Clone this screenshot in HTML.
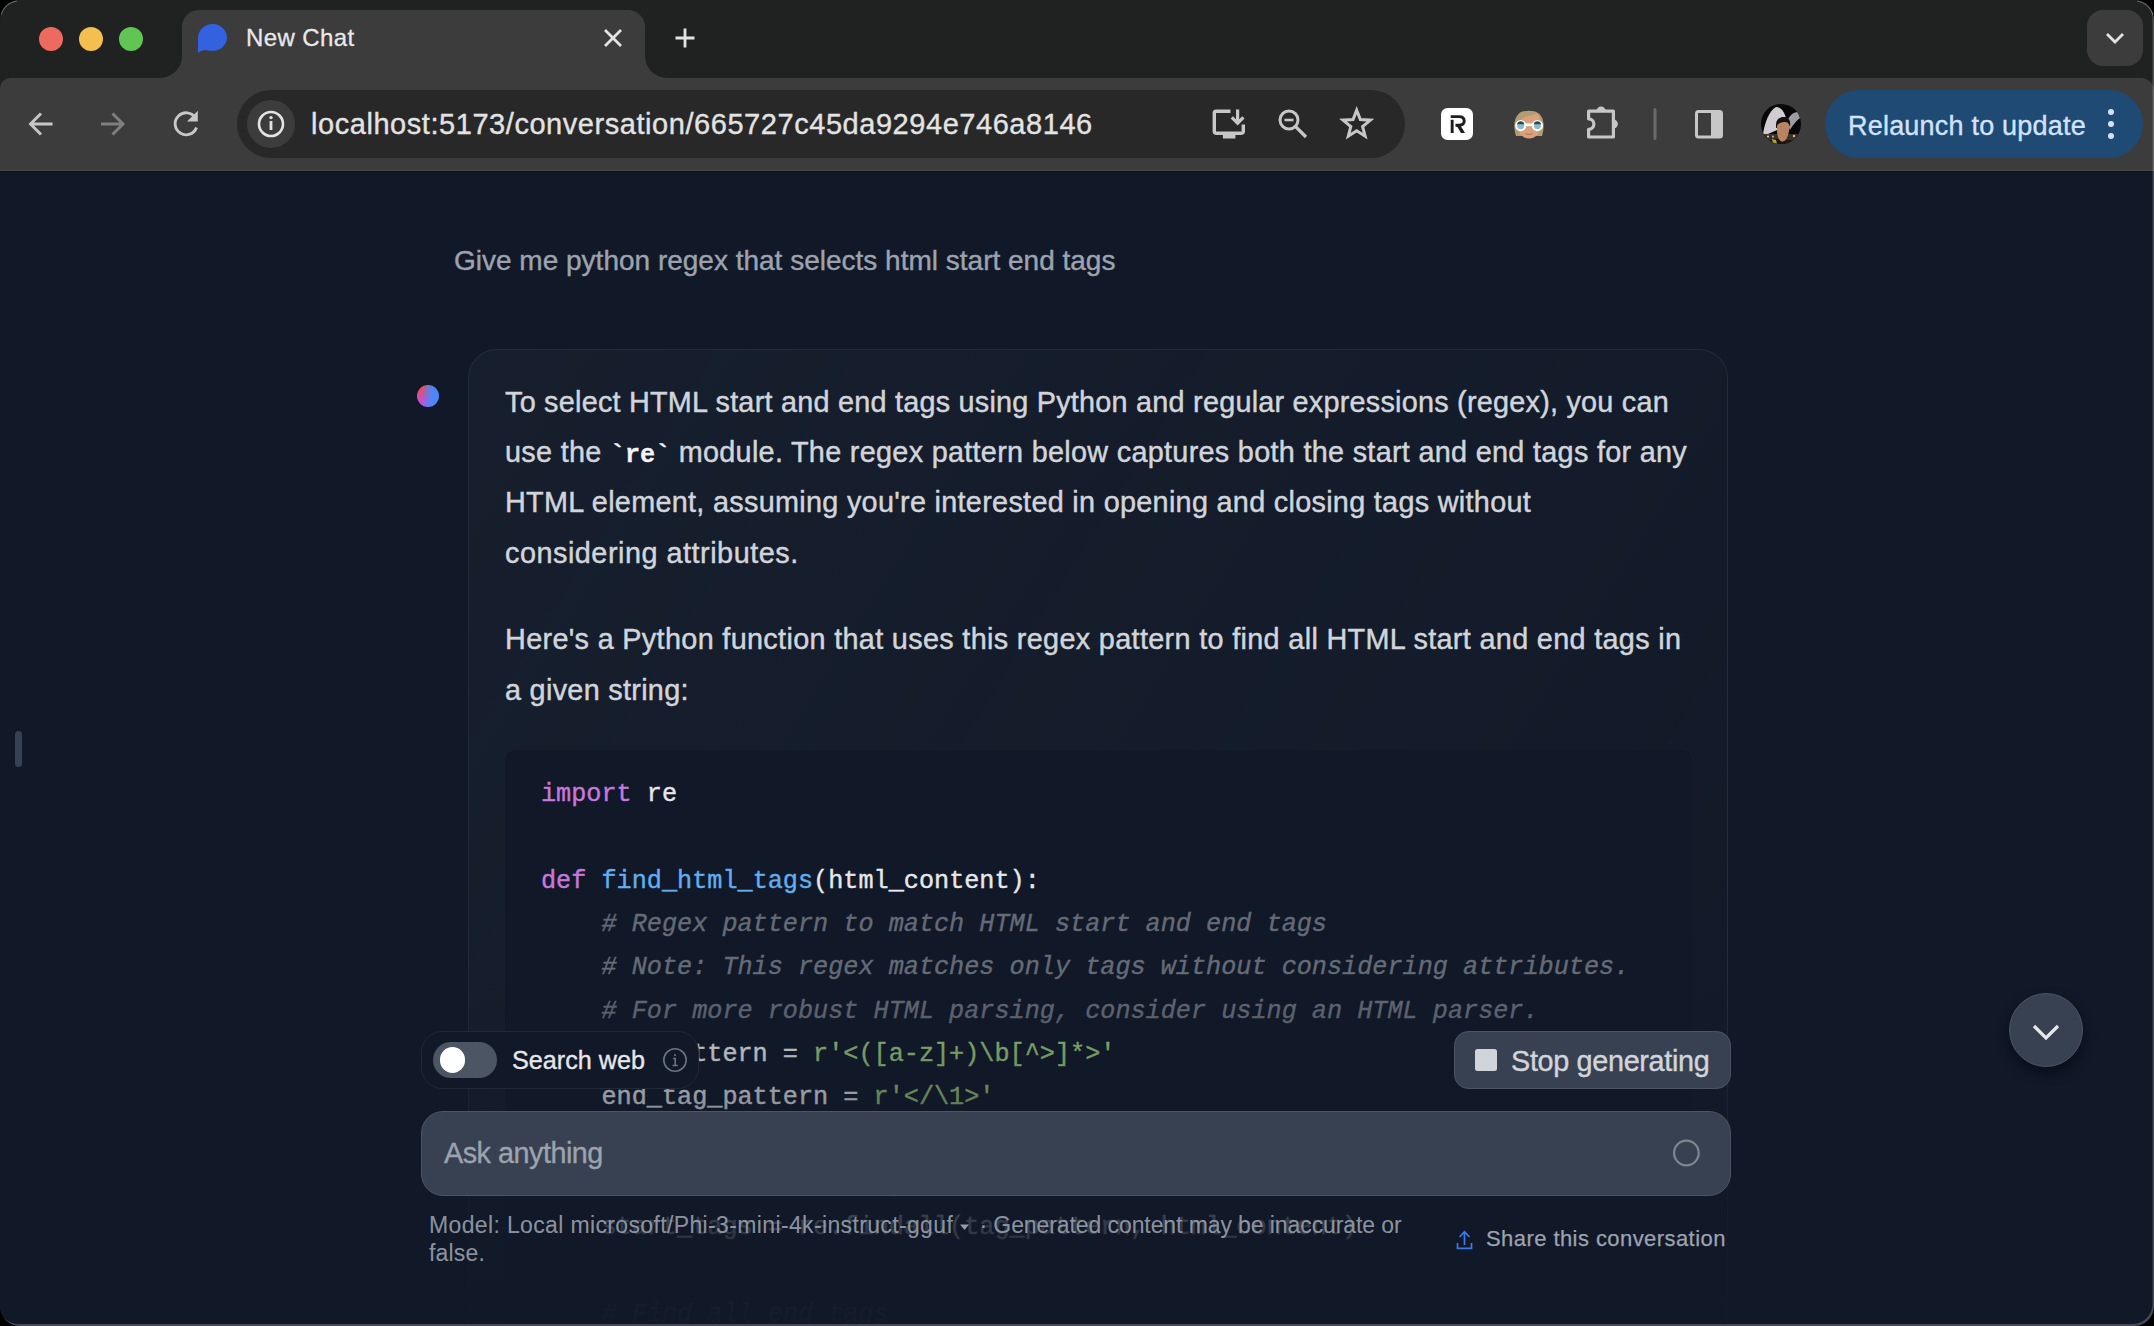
<!DOCTYPE html>
<html><head><meta charset="utf-8">
<style>
*{margin:0;padding:0;box-sizing:border-box}
html,body{width:2154px;height:1326px;overflow:hidden;background:#000}
body{font-family:"Liberation Sans",sans-serif;position:relative}
.abs{position:absolute}
#win{position:absolute;left:0;top:0;width:2154px;height:1326px;border-radius:20px;overflow:hidden;background:#111827}
#tabstrip{left:0;top:0;width:2154px;height:95px;background:#202221}
#toolbar{left:0;top:78px;width:2154px;height:93px;background:#3c3c3c;border-radius:10px 13px 0 0}
#tbline{left:0;top:170px;width:2154px;height:2px;background:#4a4b48;border-bottom:0.6px solid #0e1220}
.tl{position:absolute;top:27px;width:24px;height:24px;border-radius:50%}
#tab{left:182px;top:10px;width:463px;height:68px;background:#3c3c3c;border-radius:17px 17px 0 0}
.flare{position:absolute;top:56px;width:22px;height:22px;background:#3c3c3c}
.flare::after{content:"";position:absolute;left:0;top:0;width:22px;height:22px;background:#202221}
#flareL{left:160px}
#flareL::after{border-bottom-right-radius:22px}
#flareR{left:645px}
#flareR::after{border-bottom-left-radius:22px}
#tabtitle{left:246px;top:23.5px;font-size:24px;letter-spacing:0.4px;color:#e8e8e8;white-space:nowrap;-webkit-text-stroke:0.3px #e8e8e8}
#url{left:237px;top:90px;width:1168px;height:68px;border-radius:34px;background:#282828}
#infobg{left:247px;top:100px;width:48px;height:48px;border-radius:50%;background:#3c3c3c}
#urltext{left:311px;top:108px;font-size:29px;letter-spacing:0.553px;color:#e3e3e3;white-space:nowrap;-webkit-text-stroke:0.35px #e3e3e3}
#relaunch{left:1825px;top:90px;width:318px;height:68px;border-radius:34px;background:#1f4a73}
#relaunchtxt{left:1848px;top:111px;font-size:27px;letter-spacing:0.21px;color:#d3e3fd;white-space:nowrap;-webkit-text-stroke:0.35px #d3e3fd}
#dd{left:2087px;top:10px;width:56px;height:56px;border-radius:16px;background:#3c3c3c}

/* content */
.sans{font-family:"Liberation Sans",sans-serif}
.mono{font-family:"Liberation Mono",monospace}
#userq{left:454px;top:245px;font-size:28px;color:#9ca3af;white-space:nowrap;-webkit-text-stroke:0.4px #9ca3af}
#avatar{left:417px;top:385px;width:22px;height:22px;border-radius:50%;background:linear-gradient(to right,rgba(79,134,247,0) 20%,rgba(79,134,247,0.85) 55%,#4f86f7 75%),linear-gradient(to bottom,#ec4d58 15%,#c44fe4 85%)}
#msg{left:468px;top:349px;width:1260px;height:2000px;border-radius:29px;border:1.8px solid rgba(45,55,72,0.6);background:linear-gradient(to bottom right,rgba(31,41,55,0.42),rgba(31,41,55,0))}
.pl{position:absolute;left:505px;font-size:28.8px;color:#d1d5db;white-space:nowrap;-webkit-text-stroke:0.45px #d1d5db}
#code{left:505px;top:750px;width:1187px;height:1400px;border-radius:11px;background:#111827}
.cl{position:absolute;left:541px;font-family:"Liberation Mono",monospace;font-size:25.2px;color:#e5e7eb;white-space:pre;-webkit-text-stroke:0.4px currentColor}
.cl span{-webkit-text-stroke:0.4px currentColor}
.kw{color:#c678dd}.fn{color:#61aeee}.cm{color:#646b77;font-style:italic}.st{color:#98c379}
#fade{left:0;top:975px;width:2154px;height:351px;background:linear-gradient(to bottom,rgba(17,24,39,0) 0%,rgba(17,24,39,0.37) 34.2%,rgba(17,24,39,0.84) 71.2%,rgba(17,24,39,0.97) 100%)}
#handle{left:15px;top:731px;width:7px;height:36px;border-radius:4px;background:#374151}
</style></head><body>
<div id="win">
  <div id="tabstrip" class="abs"></div>
  <div class="tl" style="left:39px;background:#ed6a5e"></div>
  <div class="tl" style="left:79px;background:#f4bf4f"></div>
  <div class="tl" style="left:119px;background:#61c554"></div>
  <div id="flareL" class="flare"></div>
  <div id="flareR" class="flare"></div>
  <div id="tab" class="abs"></div>
  <div id="tabtitle" class="abs">New Chat</div>
  <div id="dd" class="abs"></div>
  <div id="toolbar" class="abs"></div>
  <div id="tbline" class="abs"></div>
  <div id="url" class="abs"></div>
  <div id="infobg" class="abs"></div>
  <div id="urltext" class="abs">localhost:5173/conversation/665727c45da9294e746a8146</div>
  <div id="relaunch" class="abs"></div>
  <div id="relaunchtxt" class="abs">Relaunch to update</div>


  <!-- chrome icons -->
  <svg class="abs" style="left:0;top:0" width="2154" height="172" viewBox="0 0 2154 172">
    <!-- favicon bubble -->
    <path d="M212.5 24 C204 24 198 30.5 198 38.5 L198 52.5 L204 50 C206 50.6 208.5 50.8 212.5 50.8 C220.5 50.8 227 45 227 37.4 C227 30 220.5 24 212.5 24 Z" fill="#3461e0"/>
    <!-- close x -->
    <path d="M606 31 L620 45 M620 31 L606 45" stroke="#e3e3e3" stroke-width="2.8" stroke-linecap="square"/>
    <!-- plus -->
    <path d="M685 28.5 V47.5 M675.5 38 H694.5" stroke="#e3e3e3" stroke-width="2.8"/>
    <!-- dropdown chevron -->
    <path d="M2107 34 L2115 42 L2123 34" stroke="#e3e3e3" stroke-width="2.8" fill="none"/>
    <!-- back -->
    <path d="M52.5 124 H32 M41 113.5 L30.5 124 L41 134.5" stroke="#c7c7c7" stroke-width="2.9" fill="none"/>
    <!-- forward -->
    <path d="M101 124 H121.5 M112.5 113.5 L123 124 L112.5 134.5" stroke="#7f7f7f" stroke-width="2.9" fill="none"/>
    <!-- reload -->
    <path d="M195.5 118 A11 11 0 1 0 196.5 127.5" stroke="#c7c7c7" stroke-width="2.9" fill="none"/>
    <path d="M187 121.5 H197.8 V110.7 Z" fill="#c7c7c7"/>
    <!-- info -->
    <circle cx="271" cy="124" r="12" stroke="#e3e3e3" stroke-width="2.6" fill="none"/>
    <rect x="269.6" y="121" width="2.8" height="9" fill="#e3e3e3"/>
    <circle cx="271" cy="117.6" r="1.7" fill="#e3e3e3"/>
    <!-- install -->
    <path d="M1230.5 111.2 H1216 A1.8 1.8 0 0 0 1214.3 113 V131.5 A1.8 1.8 0 0 0 1216 133.2 H1241.5 A1.8 1.8 0 0 0 1243.3 131.5 V124.5" stroke="#c7c7c7" stroke-width="3.4" fill="none"/>
    <rect x="1222.9" y="133" width="12.5" height="5.5" fill="#c7c7c7"/>
    <path d="M1237.6 109.5 V123 M1231.8 117.3 L1237.6 123.2 L1243.4 117.3" stroke="#c7c7c7" stroke-width="3.2" fill="none"/>
    <!-- zoom out -->
    <circle cx="1289" cy="120" r="9" stroke="#c7c7c7" stroke-width="3" fill="none"/>
    <path d="M1284.5 120 H1293.5" stroke="#c7c7c7" stroke-width="2.6"/>
    <path d="M1295.5 126.5 L1306 137" stroke="#c7c7c7" stroke-width="3.2"/>
    <!-- star -->
    <path d="M1356.70 110.20 L1360.34 119.58 L1370.40 120.15 L1362.60 126.52 L1365.16 136.25 L1356.70 130.80 L1348.24 136.25 L1350.80 126.52 L1343.00 120.15 L1353.06 119.58 Z" stroke="#c7c7c7" stroke-width="3" fill="none" stroke-linejoin="miter" stroke-miterlimit="3"/>
    <!-- R ext -->
    <rect x="1441" y="108" width="32" height="32" rx="6.5" fill="#ffffff"/>
    <path d="M1450.7 116.6 H1459 C1462.6 116.6 1464.2 118.7 1464.2 121.1 C1464.2 123.6 1462.6 125.3 1459 125.3 H1455.5" stroke="#1a1c20" stroke-width="2.9" fill="none"/>
    <rect x="1450.7" y="119.8" width="2.9" height="13.2" fill="#1a1c20"/>
    <path d="M1455.6 124 L1459.6 124 L1465 133 L1461 133 Z" fill="#1a1c20"/>
    <!-- face ext -->
    <path d="M1516 136 C1513.5 128 1513.5 119 1518.5 114 C1522.5 109.5 1535.5 109.5 1539.5 114 C1544.5 119 1544.5 128 1542 136 Z" fill="#b39b73"/>
    <path d="M1518.5 125 C1519 119 1524 116.5 1532 115.5 L1537 113.5 C1540 117 1540.5 121 1540 126 C1540 134 1535 138.5 1529 138.5 C1523 138.5 1518.5 134 1518.5 126 Z" fill="#d9a27d"/>
    <path d="M1525.5 133.5 C1527.5 134.6 1530.5 134.6 1532.5 133.5" stroke="#b07858" stroke-width="1.1" fill="none"/>
    <rect x="1524" y="123.5" width="10" height="2.6" fill="#ffffff"/>
    <circle cx="1520.7" cy="125.6" r="4.6" fill="#8fbccb" stroke="#ffffff" stroke-width="2"/>
    <circle cx="1537.4" cy="125.6" r="4.6" fill="#8fbccb" stroke="#ffffff" stroke-width="2"/>
    <path d="M1517 124.2 A3.8 3.8 0 0 1 1524.4 124.2 Z" fill="#264a58"/>
    <path d="M1533.7 124.2 A3.8 3.8 0 0 1 1541.1 124.2 Z" fill="#264a58"/>
    <!-- puzzle -->
    <path d="M1588.6 111.2 H1613.4 V137 H1588.6 V129.4 A5.3 5.3 0 0 0 1588.6 118.8 Z" stroke="#c7c7c7" stroke-width="3.2" fill="none" stroke-linejoin="round"/>
    <path d="M1596.4 111.5 A4.7 4.9 0 0 1 1605.8 111.5 Z" fill="#c7c7c7"/>
    <path d="M1613 119.3 A4.9 4.7 0 0 1 1613 128.7 Z" fill="#c7c7c7"/>
    <!-- separator -->
    <rect x="1653.5" y="108" width="3" height="32" rx="1.5" fill="#6a6a6a"/>
    <!-- sidebar -->
    <rect x="1696.5" y="111.5" width="25" height="25.5" rx="2" stroke="#c7c7c7" stroke-width="3" fill="none"/>
    <rect x="1711" y="111.5" width="10.5" height="25.5" fill="#c7c7c7"/>
    <!-- avatar -->
    <defs><clipPath id="avc"><circle cx="1781" cy="124" r="20"/></clipPath></defs>
    <g clip-path="url(#avc)">
      <rect x="1761" y="104" width="40" height="40" fill="#070707"/>
      <path d="M1763 134 C1765 122 1769 111 1776 107 C1782 107 1786 114 1787 124 L1782 128 L1768 134 Z" fill="#cfcdd3"/>
      <path d="M1787 122 C1789 116 1793 112 1798 112 L1800 118 C1796 121 1792 126 1790 130 Z" fill="#9d9ca3"/>
      <rect x="1761" y="134" width="40" height="7" fill="#3a3128"/>
      <circle cx="1768" cy="136.5" r="1" fill="#e8e0c8"/><circle cx="1773" cy="136.5" r="0.9" fill="#d0c8b0"/><circle cx="1794" cy="136" r="1.2" fill="#c8c0a0"/><circle cx="1797" cy="138" r="1" fill="#b0b8c8"/>
      <path d="M1776 125 C1776 119 1780 117 1784 117 C1788 117 1791 120 1790 126 L1776 128 Z" fill="#141010"/>
      <path d="M1777 126 C1778 123 1782 122 1786 122 C1790 123 1790 127 1789 131 C1788 137 1786 141 1782 142 C1779 141 1777 136 1777 131 Z" fill="#b88462"/>
      <path d="M1766 144 C1769 140 1774 138 1778 139 L1782 142 C1786 140 1790 139 1793 141 L1800 144 Z" fill="#1a1510"/>
      <path d="M1772 139 L1776 140 L1777 144 L1773 144 Z" fill="#b0a830"/>
    </g>
    <!-- relaunch dots -->
    <circle cx="2111" cy="112" r="3" fill="#d3e3fd"/>
    <circle cx="2111" cy="124" r="3" fill="#d3e3fd"/>
    <circle cx="2111" cy="136" r="3" fill="#d3e3fd"/>
  </svg>

  <!-- content -->
  <div id="handle" class="abs"></div>
  <div id="userq" class="abs">Give me python regex that selects html start end tags</div>
  <div id="avatar" class="abs"></div>
  <div id="msg" class="abs"></div>
  <div class="pl" style="top:385.5px;letter-spacing:0.236px">To select HTML start and end tags using Python and regular expressions (regex), you can</div>
  <div class="pl" style="top:435.6px;letter-spacing:0.30px">use the <b class="mono" style="font-size:25.2px;color:#f3f4f6;letter-spacing:0;-webkit-text-stroke:0.3px #f3f4f6">`re`</b> module. The regex pattern below captures both the start and end tags for any</div>
  <div class="pl" style="top:486.2px;letter-spacing:0.30px">HTML element, assuming you're interested in opening and closing tags without</div>
  <div class="pl" style="top:536.6px;letter-spacing:0.52px">considering attributes.</div>
  <div class="pl" style="top:623.2px;letter-spacing:0.333px">Here's a Python function that uses this regex pattern to find all HTML start and end tags in</div>
  <div class="pl" style="top:673.6px;letter-spacing:0.30px">a given string:</div>
  <div id="code" class="abs"></div>
  <div class="cl" style="top:772.8px;line-height:43.36px"><span class="kw">import</span> re

<span class="kw">def</span> <span class="fn">find_html_tags</span>(html_content):
    <span class="cm"># Regex pattern to match HTML start and end tags</span>
    <span class="cm"># Note: This regex matches only tags without considering attributes.</span>
    <span class="cm"># For more robust HTML parsing, consider using an HTML parser.</span>
    tag_pattern = <span class="st">r'&lt;([a-z]+)\b[^&gt;]*&gt;'</span>
    end_tag_pattern = <span class="st">r'&lt;/\1&gt;'</span>

    <span class="cm"># Find all start tags</span>
    start_tags = re.findall(tag_pattern, html_content)

    <span class="cm"># Find all end tags</span></div>
  <div id="fade" class="abs"></div>
  <div class="abs" style="left:0;top:0;width:2154px;height:1326px;border-radius:20px;box-shadow:inset -1.5px -2px 0 rgba(255,255,255,0.22);pointer-events:none"></div>

  <!-- bottom controls -->
  <div class="abs" style="left:421px;top:1031px;width:278px;height:57.5px;border-radius:21px;border:1.8px solid #1f2937;background:#111827"></div>
  <div class="abs" style="left:433px;top:1042px;width:64px;height:36px;border-radius:18px;background:#4b5563"></div>
  <div class="abs" style="left:439.5px;top:1047.3px;width:25.5px;height:25.5px;border-radius:50%;background:#fff"></div>
  <div class="abs sans" style="left:512px;top:1046px;font-size:25.2px;color:#e5e7eb;white-space:nowrap;-webkit-text-stroke:0.35px #e5e7eb">Search web</div>
  <svg class="abs" style="left:662px;top:1047px" width="26" height="26" viewBox="0 0 26 26"><circle cx="13" cy="13" r="11.2" stroke="#6b7280" stroke-width="1.6" fill="none"/><path d="M11 11.5 H13.2 V18.5 M10.5 18.5 H15.8" stroke="#6b7280" stroke-width="1.6" fill="none"/><circle cx="13" cy="8" r="1.1" fill="#6b7280"/></svg>

  <div class="abs" style="left:1454px;top:1031px;width:277px;height:57.5px;border-radius:14.4px;border:1.8px solid #4b5563;background:#374151"></div>
  <div class="abs" style="left:1475px;top:1049px;width:22px;height:22px;border-radius:2.5px;background:#d1d5db"></div>
  <div class="abs sans" style="left:1511px;top:1044.5px;font-size:28.8px;letter-spacing:-0.33px;color:#d1d5db;white-space:nowrap;-webkit-text-stroke:0.4px #d1d5db">Stop generating</div>

  <div class="abs" style="left:421px;top:1111px;width:1310px;height:85px;border-radius:22px;border:1.8px solid #4b5563;background:#374151"></div>
  <div class="abs sans" style="left:444px;top:1137px;font-size:28.8px;letter-spacing:-0.5px;color:#9ca3af;white-space:nowrap;-webkit-text-stroke:0.35px #9ca3af">Ask anything</div>
  <svg class="abs" style="left:1670px;top:1137px" width="32" height="32" viewBox="0 0 32 32"><circle cx="16.4" cy="16" r="12.3" stroke="#80868f" stroke-width="2.2" fill="none"/></svg>

  <div class="abs sans" style="left:429px;top:1210.6px;font-size:23px;line-height:28.8px;letter-spacing:0.16px;color:rgba(156,163,175,0.9);white-space:nowrap;-webkit-text-stroke:0.1px rgba(156,163,175,0.9)"><span id="ft1" style="letter-spacing:0.36px">Model: Local microsoft/Phi-3-mini-4k-instruct-gguf</span><svg width="16" height="12" viewBox="0 0 16 12" style="margin:0 0 0 4px"><path d="M3 3.5 H12 L7.5 9 Z" fill="rgba(156,163,175,0.95)"/></svg><span id="ft2" style="letter-spacing:-0.09px"> · Generated content may be inaccurate or</span><br>false.</div>
  <svg class="abs" style="left:1454px;top:1228px" width="22" height="24" viewBox="0 0 22 24"><path d="M10.5 3.5 V17 M5.5 9 L10.5 3.8 L15.5 9 M3.5 15 V20.3 H17.5 V15" stroke="#3d7ae8" stroke-width="1.7" fill="none"/></svg>
  <div class="abs sans" style="left:1486px;top:1225.4px;font-size:22px;line-height:28.8px;letter-spacing:0.43px;color:#9ca3af;white-space:nowrap;-webkit-text-stroke:0.25px #9ca3af">Share this conversation</div>

  <div class="abs" style="left:2009px;top:993px;width:74px;height:74px;border-radius:50%;border:1.8px solid #4b5563;background:#374151;box-shadow:0 6px 12px rgba(3,7,18,0.6)"></div>
  <svg class="abs" style="left:2009px;top:993px" width="74" height="74" viewBox="0 0 74 74"><path d="M25 33 L37 45 L49 33" stroke="#e5e7eb" stroke-width="3.2" fill="none"/></svg>
  <svg class="abs" style="left:0;top:0;pointer-events:none" width="2154" height="30" viewBox="0 0 2154 30"><path d="M0.7 15 A19.5 19.5 0 0 1 17 0.7" stroke="rgba(255,255,255,0.3)" stroke-width="1.4" fill="none"/><path d="M2137 0.7 A19.5 19.5 0 0 1 2153.3 15" stroke="rgba(255,255,255,0.3)" stroke-width="1.4" fill="none"/></svg>
</div>
</body></html>
